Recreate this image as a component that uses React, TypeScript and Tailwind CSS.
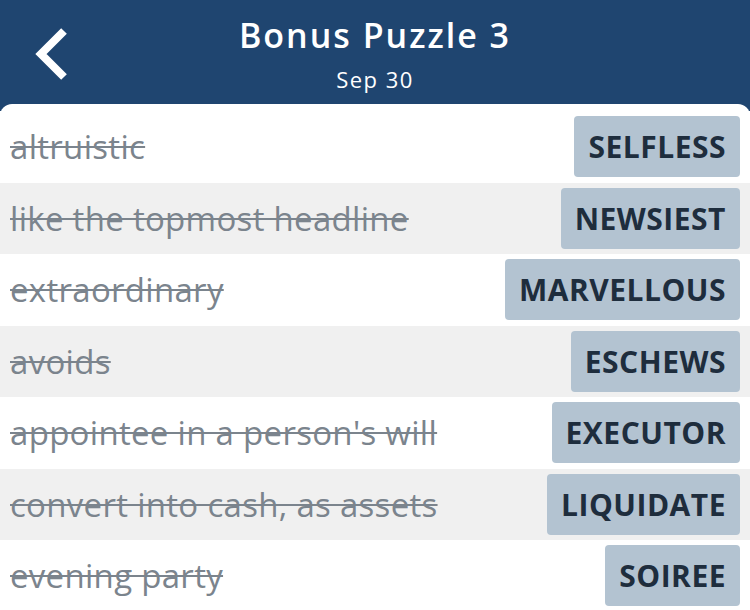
import React from "react";

const rows: [string, string][] = [
  ["altruistic", "SELFLESS"],
  ["like the topmost headline", "NEWSIEST"],
  ["extraordinary", "MARVELLOUS"],
  ["avoids", "ESCHEWS"],
  ["appointee in a person's will", "EXECUTOR"],
  ["convert into cash, as assets", "LIQUIDATE"],
  ["evening party", "SOIREE"],
];

export default function App() {
  return (
    <div
      className="w-[750px] h-[610px] overflow-hidden bg-[#1f4570]"
      style={{ fontFamily: "'Open Sans', 'Noto Sans', sans-serif" }}
    >
      <div className="relative h-[104px] flex flex-col items-center">
        <svg
          className="absolute left-[30px] top-[24px]"
          width="48"
          height="60"
          viewBox="0 0 48 60"
        >
          <polyline
            points="34,7 11,30 34,53"
            fill="none"
            stroke="white"
            strokeWidth="8"
            strokeLinecap="butt"
            strokeLinejoin="miter"
          />
        </svg>
        <div className="mt-[12px] text-white text-[34px] leading-[46px] font-semibold tracking-[2px]">
          Bonus Puzzle 3
        </div>
        <div className="mt-[7px] text-white text-[22px] leading-[28px] tracking-[1.5px]">
          Sep 30
        </div>
      </div>
      <div className="bg-white rounded-t-[12px] pt-[7px] h-[506px]">
        {rows.map(([clue, ans], i) => (
          <div
            key={i}
            className={`h-[71.5px] flex items-center justify-between pl-[10px] pr-[10px] ${
              i % 2 === 1 ? "bg-[#f0f0f0]" : "bg-white"
            }`}
          >
            <span className="text-[33px] tracking-[0.3px] text-[#7b848d] line-through decoration-[2px] decoration-[#7b848d] whitespace-nowrap">
              {clue}
            </span>
            <span className="h-[61px] flex items-center px-[14px] rounded-[4px] bg-[#b3c3d1] text-[#1e2d3d] text-[30px] font-bold tracking-[0.5px] whitespace-nowrap">
              {ans}
            </span>
          </div>
        ))}
      </div>
    </div>
  );
}
